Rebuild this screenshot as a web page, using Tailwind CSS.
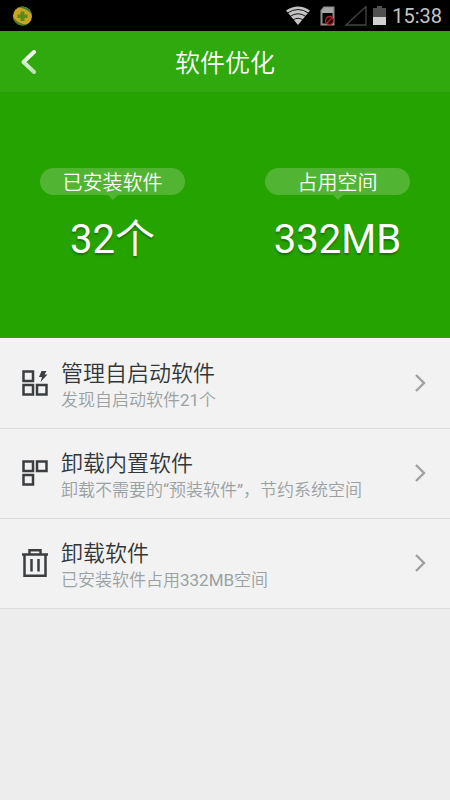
<!DOCTYPE html>
<html lang="zh-CN">
<head>
<meta charset="utf-8">
<meta name="viewport" content="width=device-width, initial-scale=1">
<title>软件优化</title>
<script src="https://cdn.jsdelivr.net/npm/@tailwindcss/browser@4"></script>
</head>
<body class="min-h-screen bg-[#ededed] font-['Roboto','Noto_Sans_CJK_SC',sans-serif] font-[350] text-[#333639]">
  <div class="flex h-[31px] items-center justify-between bg-black pl-3 pr-2">
    <svg class="size-5" viewBox="0 0 20 20" aria-hidden="true">
      <circle cx="10.500" cy="10" r="9.500" fill="#c9a424"/>
      <path d="M7 1.200A9.500 9.500 0 0 1 19.500 8Q14 2.500 7 1.200Z" fill="#417b35"/>
      <path d="M1.500 12A9.500 9.500 0 0 0 15 18.500Q7 18 1.500 12Z" fill="#417b35"/>
      <path d="M8.500 5.500h4v3h3v3.500h-3v3h-4v-3h-3V8.500h3z" fill="#5c8a16"/>
    </svg>
    <div class="flex items-center">
      <svg class="h-5 w-[102px]" viewBox="0 0 102 20" aria-hidden="true">
        <path d="M0 4.500Q12 -3.500 24 4.500L12 19Z" fill="#c4c4c4"/>
        <path d="M1.500 7Q12 0 22.500 7M4 10.500Q12 5 20 10.500M7 14Q12 10.500 17 14" fill="none" stroke="#000" stroke-width="0.900"/>
        <path d="M38 1.500h9.500v17H35.500V4.500z" fill="none" stroke="#8d8d8d" stroke-width="2"/>
        <path d="M36 7V4.500L38.500 1.500H47V7z" fill="#a5a5a5"/>
        <circle cx="43.500" cy="14.500" r="4" fill="#210404" stroke="#b52525" stroke-width="1.300"/>
        <path d="M40.500 17.500l6-6" stroke="#b52525" stroke-width="1.300"/>
        <path d="M60 19L80 0.500V19z" fill="none" stroke="#444" stroke-width="1.300"/>
        <path d="M91 0h5v2h4v9H87V2h4z" fill="#505050"/>
        <path d="M87 11h13v8H87z" fill="#d0d0d0"/>
      </svg>
      <span class="ml-1 text-[20px] font-normal leading-6 text-[#c4c4c4]">15:38</span>
    </div>
  </div>

  <header class="grid h-[62px] grid-cols-[56px_1fr_56px] items-center border-b border-[#279b08] bg-[#30a90e] text-white">
    <button type="button" aria-label="返回" class="flex h-full items-center pl-5">
      <svg class="h-7 w-5 drop-shadow-xs" viewBox="0 0 20 28" fill="none" aria-hidden="true">
        <defs><linearGradient id="arrow" x1="0" y1="3" x2="0" y2="26" gradientUnits="userSpaceOnUse"><stop stop-color="#fff"/><stop offset="1" stop-color="#b5e0a8"/></linearGradient></defs>
        <path d="M14 4L3.500 14L14 24" stroke="url(#arrow)" stroke-width="4" stroke-linecap="round" stroke-linejoin="round"/>
      </svg>
    </button>
    <h1 class="pt-1 text-center text-[25px] font-[350] leading-8">软件优化</h1>
  </header>

  <section class="grid h-[245px] grid-cols-2 bg-[#25a300] pt-[75px] text-center text-white">
    <div class="flex flex-col items-center">
      <p class="relative h-[27px] w-[145px] rounded-full bg-[#51b533] text-[20px] leading-[30px]">已安装软件
        <svg class="absolute left-1/2 top-full h-[5px] w-[10px] -translate-x-1/2" viewBox="0 0 10 5" aria-hidden="true"><path d="M0 0h10L5 5z" fill="#51b533"/></svg>
      </p>
      <p class="mt-[17px] text-[40px] font-normal leading-[56px] text-shadow-[0_2px_2px_rgb(0_0_0/0.3)]">32个</p>
    </div>
    <div class="flex flex-col items-center">
      <p class="relative h-[27px] w-[145px] rounded-full bg-[#51b533] text-[20px] leading-[30px]">占用空间
        <svg class="absolute left-1/2 top-full h-[5px] w-[10px] -translate-x-1/2" viewBox="0 0 10 5" aria-hidden="true"><path d="M0 0h10L5 5z" fill="#51b533"/></svg>
      </p>
      <p class="mt-[17px] text-[40px] font-normal leading-[56px] text-shadow-[0_2px_2px_rgb(0_0_0/0.3)]">332MB</p>
    </div>
  </section>

  <main class="bg-[#f2f2f2] pt-px">
    <a href="#autostart" class="flex h-[90px] items-center border-b border-[#dcdcdc] pb-px pl-[22px] pr-6">
      <svg class="size-[26px] shrink-0" viewBox="0 0 26 26" fill="none" stroke="#3b3e41" stroke-width="2.500" aria-hidden="true">
        <path d="M1.500 1.500h9.500v9.500H1.500zM1.500 15h9.500v9.500H1.500zM15 15h9.500v9.500H15z"/>
        <path d="M19.500 1h5l-2 3.500h3L18.500 12l1.500-5h-3z" fill="#3b3e41" stroke="none"/>
      </svg>
      <span class="ml-[13px] flex-1 pt-1.5">
        <span class="block text-[22px] leading-7">管理自启动软件</span>
        <span class="block text-[17px] leading-6 text-[#9aa1a3]">发现自启动软件<span class="font-normal">21</span>个</span>
      </span>
      <svg class="h-[18px] w-3" viewBox="0 0 12 18" fill="none" stroke="#a1a1a1" stroke-width="2.400" aria-hidden="true"><path d="M2 1l8 8-8 8"/></svg>
    </a>
    <a href="#builtin" class="flex h-[90px] items-center border-b border-[#dcdcdc] pb-px pl-[22px] pr-6">
      <svg class="size-[26px] shrink-0" viewBox="0 0 26 26" fill="none" stroke="#3b3e41" stroke-width="2.500" aria-hidden="true">
        <path d="M1.500 1.500h9.500v9.500H1.500zM1.500 15h9.500v9.500H1.500zM15 1.500h9.500v9.500H15z"/>
      </svg>
      <span class="ml-[13px] flex-1 pt-1.5">
        <span class="block text-[22px] leading-7">卸载内置软件</span>
        <span class="block text-[17px] leading-6 text-[#9aa1a3]">卸载不需要的<span class="font-normal">“</span>预装软件<span class="font-normal">”</span>，节约系统空间</span>
      </span>
      <svg class="h-[18px] w-3" viewBox="0 0 12 18" fill="none" stroke="#a1a1a1" stroke-width="2.400" aria-hidden="true"><path d="M2 1l8 8-8 8"/></svg>
    </a>
    <a href="#uninstall" class="flex h-[90px] items-center border-b border-[#dcdcdc] pb-px pl-[22px] pr-6">
      <svg class="h-[28px] w-[26px] shrink-0" viewBox="0 0 26 28" fill="none" stroke="#3b3e41" stroke-width="2.500" aria-hidden="true">
        <path d="M0 5.500h26M7.500 5V1.300h11V5M2.500 5.500v21.200h21V5.500M9.500 10v12.500M16.500 10v12.500"/>
      </svg>
      <span class="ml-[13px] flex-1 pt-1.5">
        <span class="block text-[22px] leading-7">卸载软件</span>
        <span class="block text-[17px] leading-6 text-[#9aa1a3]">已安装软件占用<span class="font-normal">332MB</span>空间</span>
      </span>
      <svg class="h-[18px] w-3" viewBox="0 0 12 18" fill="none" stroke="#a1a1a1" stroke-width="2.400" aria-hidden="true"><path d="M2 1l8 8-8 8"/></svg>
    </a>
  </main>
</body>
</html>
